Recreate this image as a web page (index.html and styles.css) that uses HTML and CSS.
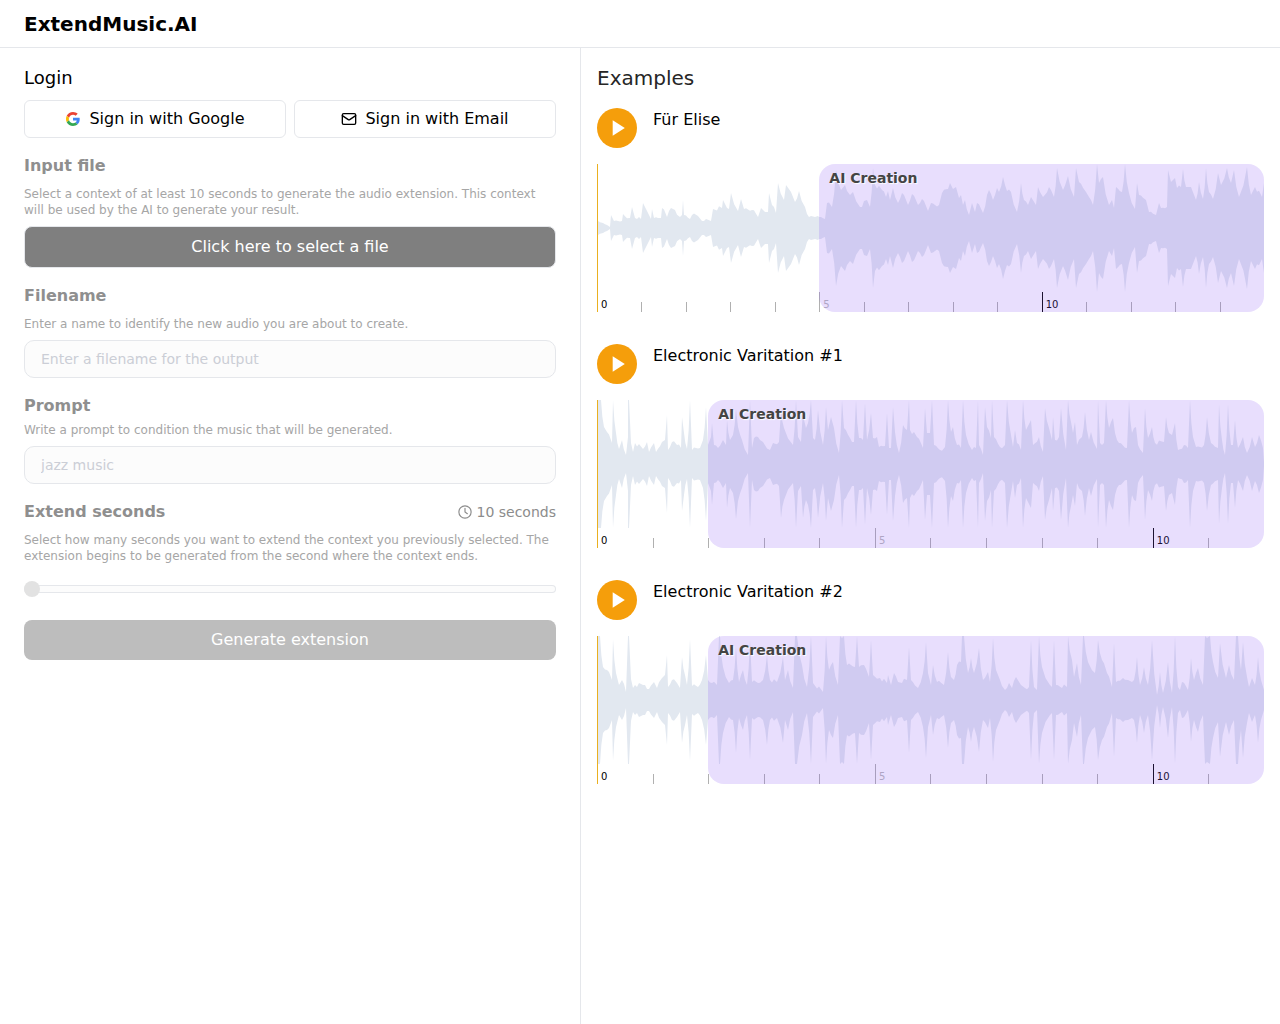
FILE: index.html
```html
<!DOCTYPE html>
<html lang="en">
<head>
  <meta charset="utf-8">
  <meta name="viewport" content="width=device-width, initial-scale=1">
  <title>ExtendMusic.AI</title>
  <link rel="stylesheet" href="styles.css">
</head>
<body>
  <header class="topbar"><h1 class="brand">ExtendMusic.AI</h1></header>
  <main class="layout">
    <div class="panel">
      <section>
        <h2 class="login-title">Login</h2>
        <div class="login-buttons">
          <button class="login-button" type="button">
            <svg class="icon" viewBox="0 0 48 48" aria-hidden="true">
              <path fill="#ea4335" d="M24 9.500c3.500 0 6.700 1.200 9.200 3.600l6.900-6.900C35.900 2.400 30.500 0 24 0 14.600 0 6.500 5.400 2.600 13.200l8 6.200C12.500 13.700 17.700 9.500 24 9.500z"/>
              <path fill="#4285f4" d="M47 24.600c0-1.600-.2-3.100-.4-4.600H24v9h12.900c-.6 3-2.300 5.500-4.800 7.200l7.700 6C44.400 38 47 31.800 47 24.600z"/>
              <path fill="#fbbc05" d="M10.500 28.600c-.5-1.500-.8-3-.8-4.600s.3-3.100.8-4.600l-8-6.200C.9 16.500 0 20.100 0 24s.9 7.500 2.600 10.800z"/>
              <path fill="#34a853" d="M24 48c6.500 0 11.900-2.100 15.900-5.800l-7.700-6c-2.200 1.500-4.900 2.300-8.200 2.300-6.300 0-11.600-4.200-13.500-9.900l-8 6.200C6.500 42.600 14.600 48 24 48z"/>
            </svg>
            Sign in with Google
          </button>
          <button class="login-button" type="button">
            <svg class="icon icon-mail" viewBox="0 0 24 24" aria-hidden="true">
              <rect x="2" y="4" width="20" height="16" rx="2"/>
              <path d="M2 7l8.900 6a2 2 0 0 0 2.200 0L22 7"/>
            </svg>
            Sign in with Email
          </button>
        </div>
      </section>

      <section class="field">
        <h3 class="field-title">Input file</h3>
        <p class="hint">Select a context of at least 10 seconds to generate the audio extension. This context will be used by the AI to generate your result.</p>
        <button class="file-button" type="button">Click here to select a file</button>
      </section>

      <section class="field">
        <label class="field-title" for="filename">Filename</label>
        <p class="hint">Enter a name to identify the new audio you are about to create.</p>
        <input class="text-input" id="filename" type="text" placeholder="Enter a filename for the output">
      </section>

      <section class="field field-tight">
        <label class="field-title" for="prompt">Prompt</label>
        <p class="hint">Write a prompt to condition the music that will be generated.</p>
        <input class="text-input" id="prompt" type="text" placeholder="jazz music">
      </section>

      <section class="field">
        <div class="field-head">
          <label class="field-title" for="seconds">Extend seconds</label>
          <output class="duration" for="seconds">
            <svg class="icon-clock" viewBox="0 0 24 24" aria-hidden="true">
              <circle cx="12" cy="12" r="10.500"/>
              <path d="M12 5.500V12l4 3"/>
            </svg>
            10 seconds
          </output>
        </div>
        <p class="hint">Select how many seconds you want to extend the context you previously selected. The extension begins to be generated from the second where the context ends.</p>
        <input class="slider" id="seconds" type="range" min="10" max="60" value="10">
      </section>

      <button class="generate-button" type="button">Generate extension</button>
    </div>

    <div class="examples">
      <h2 class="examples-title">Examples</h2>
      <article class="example" data-track="elise">
        <div class="example-head">
          <button class="play" type="button" aria-label="Play Für Elise"><svg viewBox="0 0 40 40" aria-hidden="true"><path d="M15.700 12.300L27.800 20l-12.100 7.700z"/></svg></button>
          <h3 class="example-title">Für Elise</h3>
        </div>
        <div class="track"><svg class="wave" viewBox="0 0 667 128" preserveAspectRatio="none" aria-hidden="true"><path/></svg><div class="timeline"></div><div class="region">AI Creation</div></div>
      </article>
      <article class="example" data-track="variation1">
        <div class="example-head">
          <button class="play" type="button" aria-label="Play Electronic Varitation #1"><svg viewBox="0 0 40 40" aria-hidden="true"><path d="M15.700 12.300L27.800 20l-12.100 7.700z"/></svg></button>
          <h3 class="example-title">Electronic Varitation #1</h3>
        </div>
        <div class="track"><svg class="wave" viewBox="0 0 667 128" preserveAspectRatio="none" aria-hidden="true"><path/></svg><div class="timeline"></div><div class="region">AI Creation</div></div>
      </article>
      <article class="example" data-track="variation2">
        <div class="example-head">
          <button class="play" type="button" aria-label="Play Electronic Varitation #2"><svg viewBox="0 0 40 40" aria-hidden="true"><path d="M15.700 12.300L27.800 20l-12.100 7.700z"/></svg></button>
          <h3 class="example-title">Electronic Varitation #2</h3>
        </div>
        <div class="track"><svg class="wave" viewBox="0 0 667 128" preserveAspectRatio="none" aria-hidden="true"><path/></svg><div class="timeline"></div><div class="region">AI Creation</div></div>
      </article>
    </div>
  </main>
  <script src="waves.js"></script>
</body>
</html>
```
FILE: styles.css
```css
* { box-sizing: border-box; }

body {
  display: flex;
  flex-direction: column;
  min-height: 100vh;
  margin: 0;
  background: #fff;
  color: #000;
  font: 16px/24px "DejaVu Sans", sans-serif;
}

h1, h2, h3, p { margin: 0; }
button, input { font: inherit; }
button { cursor: pointer; }

.topbar {
  padding: 10px 24px 9px;
  border-bottom: 1px solid #e5e7eb;
}
.brand { font-size: 20px; line-height: 28px; font-weight: 700; }

.layout {
  display: grid;
  grid-template-columns: minmax(0, 581fr) minmax(0, 699fr);
  flex: 1;
}

.panel {
  display: flex;
  flex-direction: column;
  gap: 16px;
  padding: 16px 24px;
  border-right: 1px solid #e5e7eb;
}

.login-title { font-size: 18px; line-height: 28px; font-weight: 400; }
.login-buttons {
  display: grid;
  grid-template-columns: 1fr 1fr;
  gap: 8px;
  margin-top: 8px;
}
.login-button {
  display: flex;
  align-items: center;
  justify-content: center;
  gap: 8px;
  height: 38px;
  padding: 0 16px;
  border: 1px solid #e5e7eb;
  border-radius: 6px;
  background: #fff;
  color: #000;
}
.icon { width: 16px; height: 16px; padding: 1px; }
.icon-mail {
  padding: 0;
  fill: none;
  stroke: currentColor;
  stroke-width: 2;
  stroke-linecap: round;
  stroke-linejoin: round;
}

.field { display: flex; flex-direction: column; gap: 8px; }
.field-title { color: #8f8f8f; font-size: 16px; line-height: 24px; font-weight: 700; }
.field-tight .field-title { margin-bottom: -4px; }
.field-head { display: flex; align-items: center; justify-content: space-between; }
.hint { color: #a6a6a6; font-size: 12px; line-height: 16px; }

.file-button {
  height: 42px;
  border: 1px solid #e5e7eb;
  border-radius: 8px;
  background: #7f7f7f;
  color: #fff;
}
.text-input {
  width: 100%;
  height: 38px;
  padding: 0 16px;
  border: 1px solid #e5e7eb;
  border-radius: 10px;
  background: #fcfcfc;
  font-size: 14px;
}
.text-input::placeholder { color: #cbced6; opacity: 1; }

.duration { display: flex; align-items: center; gap: 5px; color: #8c8c8c; font-size: 14px; }
.icon-clock { width: 14px; height: 14px; fill: none; stroke: currentColor; stroke-width: 2; stroke-linecap: round; }

.slider {
  appearance: none;
  width: 100%;
  height: 16px;
  margin: 9px 0 7px;
  background: transparent;
}
.slider::-webkit-slider-runnable-track {
  height: 8px;
  border-radius: 4px;
  background: #fcfcfc;
  box-shadow: inset 0 0 0 1px #e5e7eb;
}
.slider::-webkit-slider-thumb {
  appearance: none;
  width: 16px;
  height: 16px;
  margin-top: -4px;
  border-radius: 50%;
  background: #e2e2e2;
}
.generate-button {
  height: 40px;
  border: 0;
  border-radius: 8px;
  background: #bdbdbd;
  color: #fff;
}

.examples { padding: 16px; }
.examples-title { color: #262626; font-size: 20px; line-height: 28px; font-weight: 400; margin-bottom: 16px; }
.example { margin-bottom: 32px; }
.example-head { display: flex; gap: 16px; margin-bottom: 16px; }
.example-title { font-size: 16px; line-height: 24px; font-weight: 400; }
.play {
  width: 40px;
  height: 40px;
  padding: 0;
  border: 0;
  border-radius: 50%;
  background: #f59e0b;
}
.play svg { display: block; fill: #fff; }

.track { position: relative; }
.track::after {
  content: "";
  position: absolute;
  z-index: 1;
  top: 0;
  bottom: 0;
  left: 0;
  width: 1px;
  background: #eab020;
}
.wave { display: block; width: 100%; height: 128px; fill: #e2e8f0; }

.timeline {
  display: grid;
  grid-auto-flow: column;
  grid-auto-columns: minmax(0, 1fr);
  align-items: end;
  height: 20px;
}
.tick {
  height: 10px;
  border-left: 1px solid #b0b0b0;
  white-space: nowrap;
}
.tick-labelled {
  height: 20px;
  padding: 7px 0 0 3px;
  font-size: 10px;
  line-height: 12px;
  color: #b8b8b8;
}
.tick-major { border-color: #000; color: #000; }

.region {
  position: absolute;
  inset: 0 0 0 auto;
  padding: 4px 10px;
  border-radius: 16px;
  background: rgba(139, 92, 246, 0.2);
  color: #444;
  font-size: 14px;
  line-height: 20px;
  font-weight: 700;
  text-shadow: 1px 1px 1px #fff;
}
```
FILE: waves.js
```js
// Each track: length and context in seconds, then peaks as "position,amplitude" pairs.
const tracks = {
  elise: {
    length: 15,
    context: 5,
    peaks: `0,7 1,7 6,5 10,3 13,1 14,13 17,7 25,7 26,14 33,10 35,21 38,10 42,11 44,9 46,25 49,19 54,9 55,19 57,10 64,10
      65,20 70,11 74,20 78,18 83,11 85,13 86,28 87,13 93,9 95,13 101,12 107,7 109,9 114,7 116,19 125,20 126,28 132,19
      134,35 141,17 144,29 147,19 155,18 161,11 164,20 168,16 171,16 172,35 175,23 179,15 181,45 187,28 189,43 194,36
      198,26 202,37 208,21 212,11 221,12 222,11 228,9 230,25 235,21 239,58 244,38 248,43 253,33 256,36 263,21 270,28
      273,21 276,60 278,43 285,38 289,31 291,37 293,28 296,40 301,25 305,35 311,23 315,34 321,23 325,29 331,17 334,25
      342,23 345,35 351,39 353,45 356,39 359,41 362,30 364,33 366,23 368,28 372,13 375,25 378,16 380,25 386,15 390,33
      392,38 396,28 400,40 402,36 406,51 410,37 414,36 420,16 424,45 427,28 431,23 434,31 439,23 441,41 446,31 452,41
      457,31 460,60 466,38 471,52 477,31 479,60 482,46 489,36 492,31 496,23 500,64 502,45 506,51 512,23 515,28 517,20
      519,41 525,36 528,64 532,35 538,19 540,45 542,33 549,28 552,16 559,13 562,25 564,20 570,21 571,58 574,46 578,50
      580,40 584,41 586,59 589,41 594,41 599,28 602,46 606,29 609,60 612,36 616,29 621,55 624,43 630,60 634,45 637,58
      642,31 650,61 654,33 658,41 665,31 667,45`
  },
  variation1: {
    length: 12,
    context: 2,
    peaks: `0,64 4,64 7,37 10,32 15,21 16,64 19,31 22,15 25,24 29,9 31,27 31,64 32,64 34,21 36,12 38,21 46,15 50,22 52,12
      57,21 59,12 65,22 68,24 70,49 71,14 75,22 80,19 84,16 85,47 87,31 90,15 93,64 95,14 103,16 106,24 109,57 111,19
      114,27 115,41 117,19 121,16 126,24 129,19 130,44 133,24 136,29 139,55 141,37 145,24 151,9 153,64 155,16 157,26
      161,27 166,22 173,14 176,21 182,22 184,54 187,36 196,19 199,64 201,27 204,22 206,54 209,36 211,41 214,64 216,26
      218,24 221,54 226,19 229,57 231,34 234,47 237,36 242,11 245,64 247,36 253,26 257,22 259,64 262,26 266,24 268,61
      270,24 274,51 276,26 280,27 282,17 288,18 290,51 292,16 294,16 296,57 298,32 302,11 306,39 310,34 312,64 313,34
      320,27 326,16 328,56 330,31 333,31 335,64 337,19 343,14 348,17 351,64 354,32 356,37 360,19 364,16 366,64 369,29
      375,14 379,16 381,64 382,19 386,9 388,57 390,37 394,26 395,64 397,27 403,17 408,19 410,64 414,29 416,17 418,34
      420,21 424,14 426,64 429,34 434,44 436,19 442,27 446,12 448,56 452,36 455,24 456,47 458,24 462,27 464,56 469,14
      471,64 474,42 476,31 478,42 480,19 485,27 488,52 492,24 494,32 500,15 501,64 503,21 507,21 509,64 512,36 516,46
      518,31 522,21 530,16 532,64 535,31 539,37 541,19 546,11 548,56 551,26 555,37 558,21 567,22 569,47 572,31 575,29
      578,41 581,14 587,19 591,16 593,64 596,27 599,17 607,19 610,47 614,21 621,16 622,60 625,24 628,9 631,60 634,19
      636,19 638,44 641,16 646,27 650,11 655,27 658,17 662,29 666,16 667,2`
  },
  variation2: {
    length: 12,
    context: 2,
    peaks: `0,64 3,64 6,33 10,30 15,20 16,61 19,27 22,15 25,20 29,8 31,64 32,64 34,21 36,12 38,15 48,15 52,11 57,18 60,12
      65,22 68,25 70,45 71,13 75,20 80,17 83,12 85,43 88,25 90,15 93,61 95,14 101,13 105,20 109,45 111,20 115,17 120,15
      122,64 123,64 126,33 132,17 136,20 139,53 142,18 146,30 150,15 153,60 155,18 161,17 166,20 170,45 173,20 180,18
      186,43 188,20 191,30 196,12 198,64 200,64 205,35 210,13 214,64 216,17 226,8 229,64 232,30 236,38 241,15 243,64
      247,64 250,35 258,33 260,64 262,33 267,35 272,23 274,60 276,25 283,22 290,17 291,25 294,15 297,27 301,18 310,20
      312,53 314,20 321,12 326,27 329,58 331,27 334,15 336,35 340,18 347,15 351,48 354,23 357,20 360,35 364,38 365,64
      367,64 371,27 374,42 377,27 382,52 386,20 391,28 393,18 396,62 399,30 403,20 408,10 412,17 415,12 419,23 424,15
      428,12 432,13 434,60 437,13 440,10 442,64 445,33 453,15 455,13 457,60 459,15 470,13 471,64 475,40 477,23 480,37
      484,15 486,64 487,64 491,38 498,27 501,60 505,40 510,27 515,13 517,57 519,18 526,22 531,20 537,20 540,43 543,15
      547,33 551,15 555,60 560,5 563,28 566,7 571,38 575,7 578,64 581,13 583,10 585,18 591,10 594,42 597,20 601,32
      606,15 608,64 613,64 616,38 621,22 623,57 629,22 632,35 637,20 639,64 641,64 644,30 646,58 650,23 652,13 655,22
      658,15 661,43 664,20 667,10`
  }
};

const middle = 64;

// Narrows tall peaks toward the tip, and roughens long slopes a little.
function shape(peaks) {
  const points = [];
  peaks.forEach(([x, a], i) => {
    points.push([x, a]);
    const next = peaks[i + 1];
    if (!next) return;
    const width = next[0] - x;
    const rise = next[1] - a;
    if (Math.abs(rise) > 14 && width >= 3) {
      const low = Math.min(a, next[1]);
      const nearTip = rise > 0 ? next[0] - width * 0.45 : x + width * 0.45;
      points.push([nearTip, low + Math.abs(rise) * 0.38]);
    } else if (width >= 4) {
      for (let step = 2; step < width - 1; step += 2) {
        const rough = ((x + step) * 7) % 5 - 2;
        points.push([x + step, Math.max(1, a + rise * step / width + rough * Math.min(1, a / 14))]);
      }
    }
  });
  return points;
}

for (const example of document.querySelectorAll(".example")) {
  const track = tracks[example.dataset.track];
  const peaks = shape(track.peaks.trim().split(/\s+/).map(pair => pair.split(",").map(Number)));
  const upper = peaks.map(([x, a]) => `${x},${middle - a}`);
  const lower = peaks.map(([x, a]) => `${x},${middle + a}`).reverse();
  example.querySelector(".wave path").setAttribute("d", `M${upper.concat(lower).join("L")}Z`);

  const timeline = example.querySelector(".timeline");
  for (let second = 0; second < track.length; second++) {
    const tick = document.createElement("span");
    tick.className = "tick";
    if (second % 5 === 0) {
      tick.classList.add("tick-labelled");
      tick.textContent = second;
    }
    if (second % 10 === 0) tick.classList.add("tick-major");
    timeline.append(tick);
  }

  example.querySelector(".region").style.width = `${100 * (1 - track.context / track.length)}%`;
}
```
